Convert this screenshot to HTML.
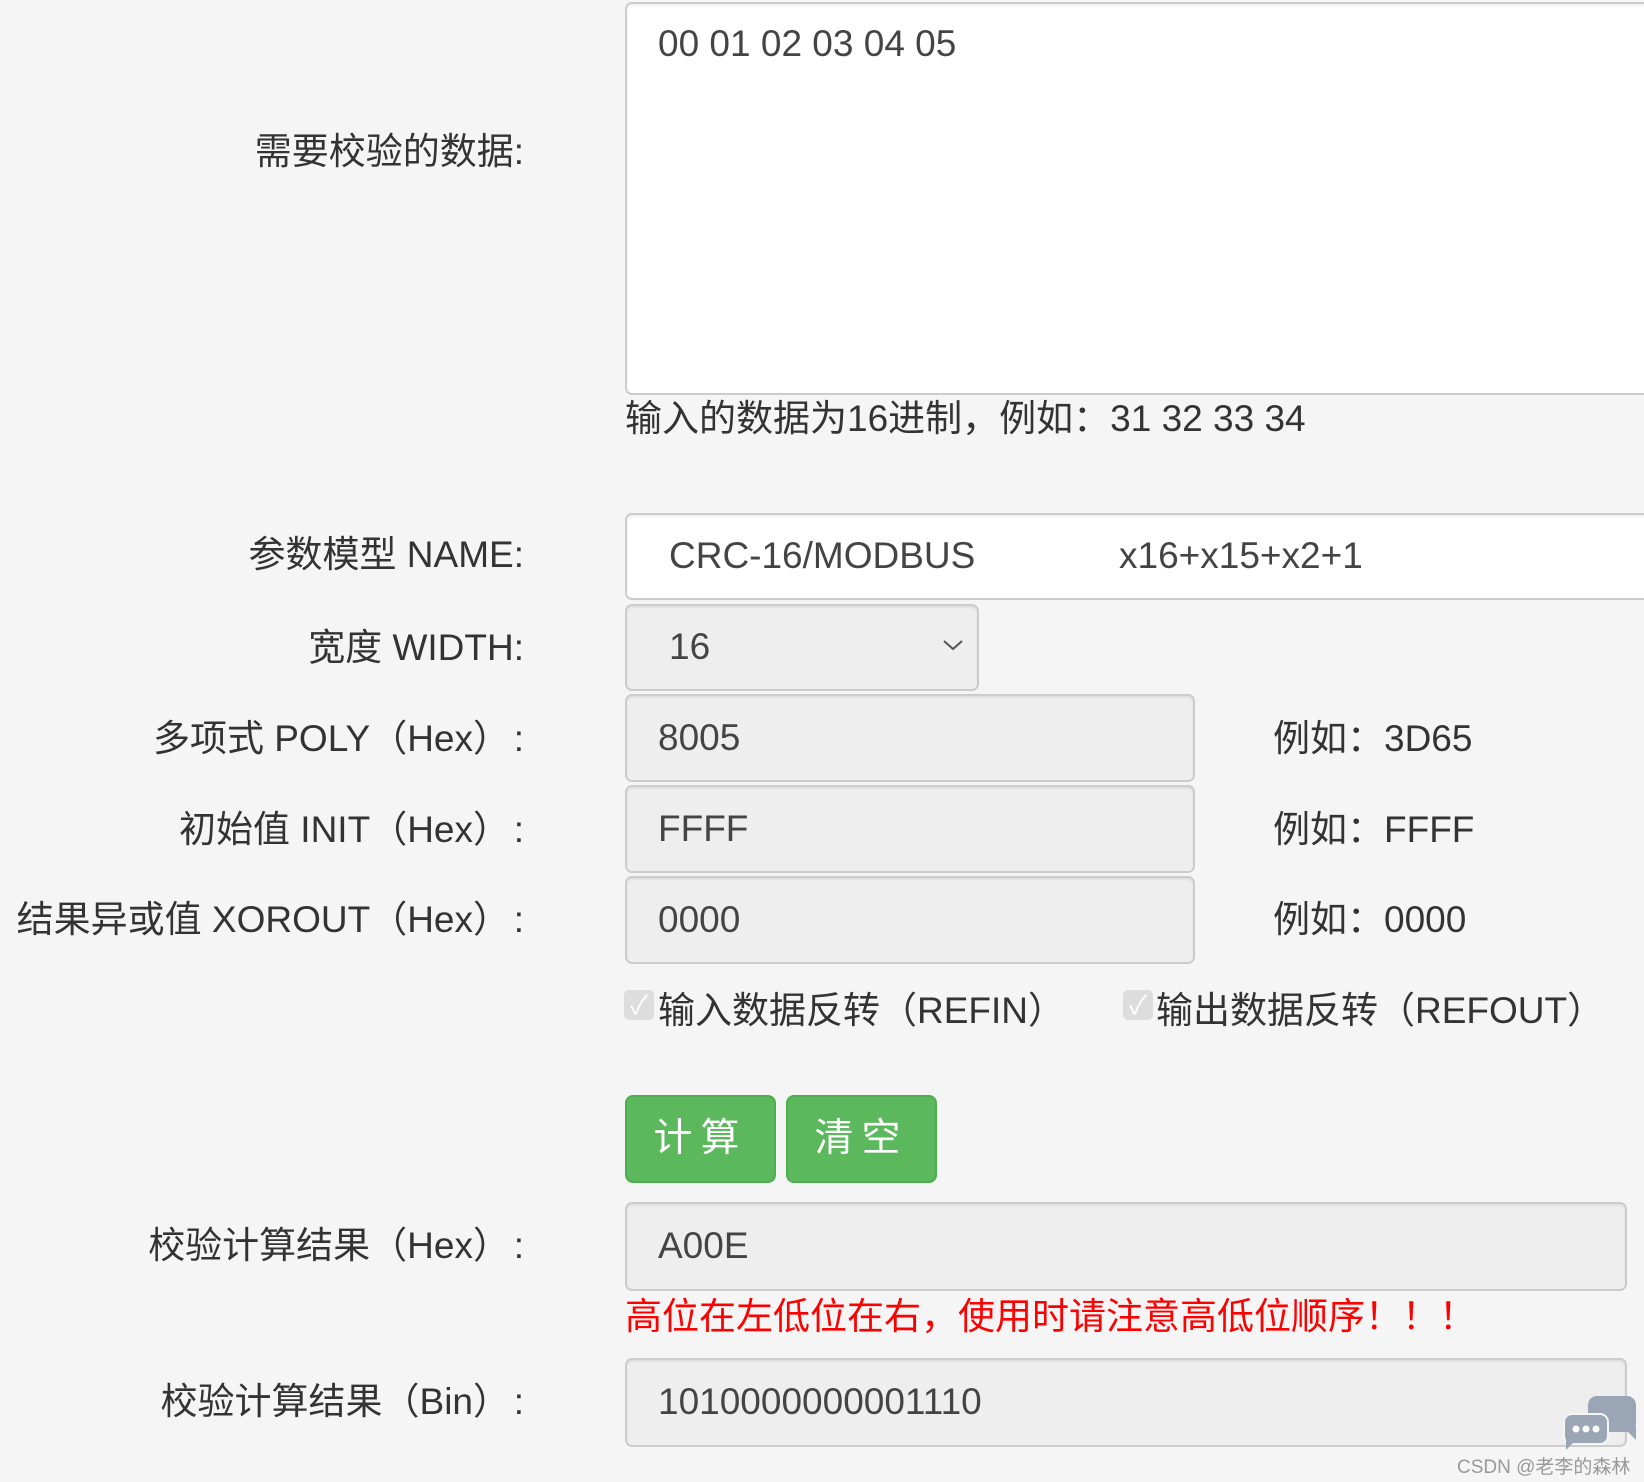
<!DOCTYPE html>
<html><head><meta charset="utf-8"><style>
body{margin:0;width:1644px;height:1482px;background:#f5f5f5;position:relative;overflow:hidden;font-family:"Liberation Sans","Noto Sans CJK SC",sans-serif;color:#333;font-size:37px}
.a{position:absolute;white-space:nowrap}
.l{position:absolute;right:1120px;white-space:nowrap;line-height:40px}
.box{position:absolute;box-sizing:border-box;border:2px solid #ccc;border-radius:7px;background:#eee;box-shadow:inset 0 2px 2px rgba(0,0,0,.06)}
.t{position:absolute;line-height:40px;white-space:nowrap;color:#444}
.btn{position:absolute;background:#5cb85c;border:2px solid #4cae4c;border-radius:8px;color:#fff;box-sizing:border-box;text-align:center;line-height:84px;font-size:39px;letter-spacing:8px}
.cb{position:absolute;width:30px;height:30px;background:#ddd;border-radius:5px;color:#fff;font-size:26px;line-height:30px;text-align:center}
.c{display:inline-block;width:14px;text-align:right}
</style></head><body>
<div class="box" style="left:625px;top:2px;width:1100px;height:393px;background:#fff"></div>
<div class="t" style="left:658px;top:24px">00 01 02 03 04 05</div>
<div class="l" style="top:132px">需要校验的数据:</div>
<div class="a" style="left:625px;top:399px;line-height:40px">输入的数据为16进制，例如：31 32 33 34</div>

<div class="box" style="left:625px;top:513px;width:1100px;height:87px;background:#fff"></div>
<div class="t" style="left:669px;top:536px">CRC-16/MODBUS</div>
<div class="t" style="left:1119px;top:536px">x16+x15+x2+1</div>
<div class="l" style="top:535px">参数模型 NAME:</div>

<div class="box" style="left:625px;top:604px;width:354px;height:87px"></div>
<div class="t" style="left:669px;top:627px">16</div>
<svg class="a" style="left:942px;top:638px" width="22" height="14"><path d="M2 3 L11 11 L20 3" stroke="#555" stroke-width="2" fill="none"/></svg>
<div class="l" style="top:628px">宽度 WIDTH:</div>

<div class="box" style="left:625px;top:694px;width:570px;height:88px"></div>
<div class="t" style="left:658px;top:718px">8005</div>
<div class="l" style="top:719px">多项式 POLY（Hex）<span class="c">:</span></div>
<div class="a" style="left:1273px;top:719px;line-height:40px">例如：3D65</div>

<div class="box" style="left:625px;top:785px;width:570px;height:88px"></div>
<div class="t" style="left:658px;top:809px">FFFF</div>
<div class="l" style="top:810px">初始值 INIT（Hex）<span class="c">:</span></div>
<div class="a" style="left:1273px;top:810px;line-height:40px">例如：FFFF</div>

<div class="box" style="left:625px;top:876px;width:570px;height:88px"></div>
<div class="t" style="left:658px;top:900px">0000</div>
<div class="l" style="top:900px">结果异或值 XOROUT（Hex）<span class="c">:</span></div>
<div class="a" style="left:1273px;top:900px;line-height:40px">例如：0000</div>

<div class="cb" style="left:624px;top:990px">✓</div>
<div class="a" style="left:658px;top:991px;line-height:40px">输入数据反转（REFIN）</div>
<div class="cb" style="left:1123px;top:990px">✓</div>
<div class="a" style="left:1156px;top:991px;line-height:40px">输出数据反转（REFOUT）</div>

<div class="btn" style="left:625px;top:1095px;width:151px;height:88px">计算</div>
<div class="btn" style="left:786px;top:1095px;width:151px;height:88px">清空</div>

<div class="box" style="left:625px;top:1202px;width:1002px;height:89px"></div>
<div class="t" style="left:658px;top:1226px">A00E</div>
<div class="l" style="top:1226px">校验计算结果（Hex）<span class="c">:</span></div>
<div class="a" style="left:625px;top:1297px;line-height:40px;color:#f00">高位在左低位在右，使用时请注意高低位顺序！！！</div>

<div class="box" style="left:625px;top:1358px;width:1002px;height:89px"></div>
<div class="t" style="left:658px;top:1382px">1010000000001110</div>
<div class="l" style="top:1382px">校验计算结果（Bin）<span class="c">:</span></div>

<svg class="a" style="left:1562px;top:1396px" width="76" height="56"><rect x="26" y="0" width="48" height="36" rx="9" fill="#9aa6b6"/><path d="M66 36 L74 44 L74 30 Z" fill="#9aa6b6"/><rect x="2" y="18" width="44" height="30" rx="8" fill="#9aa6b6" stroke="#f5f5f5" stroke-width="2"/><path d="M4 44 L4 54 L12 46 Z" fill="#9aa6b6"/><circle cx="14" cy="33" r="3.5" fill="#fff"/><circle cx="24" cy="33" r="3.5" fill="#fff"/><circle cx="34" cy="33" r="3.5" fill="#fff"/></svg>
<div class="a" style="left:1457px;top:1452px;font-size:19px;color:#999">CSDN @老李的森林</div>
</body></html>
